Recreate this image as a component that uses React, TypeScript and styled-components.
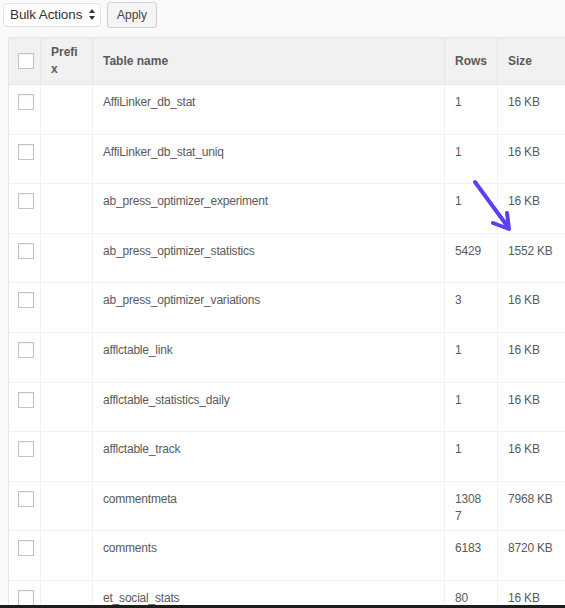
import React from "react";
import styled, { createGlobalStyle } from "styled-components";

const Global = createGlobalStyle`
  html, body { margin: 0; padding: 0; background: #fafafa; }
  body { font-family: "Liberation Sans", Arial, Helvetica, sans-serif; color: #555; }
  * { box-sizing: border-box; }
`;

const Page = styled.div`
  position: relative;
  height: 608px;
  width: 565px;
  overflow: hidden;
  display: grid;
  grid-template-rows: 1fr 3px;
`;

const Content = styled.div`
  overflow: hidden;
  min-height: 0;
`;

const Footer = styled.div`
  background: #1d1d1f;
`;

const Toolbar = styled.div`
  display: flex;
  align-items: center;
  gap: 6px;
  height: 37px;
  padding: 0 0 8px 3px;
`;

const Select = styled.div`
  display: flex;
  align-items: center;
  justify-content: space-between;
  width: 98px;
  height: 24px;
  padding: 0 5px 0 6px;
  background: #fff;
  border: 1px solid #e2e2e2;
  border-radius: 4px;
  font-size: 13.5px;
  letter-spacing: -0.1px;
  color: #333;
`;

const Button = styled.div`
  display: flex;
  align-items: center;
  justify-content: center;
  width: 50px;
  height: 26px;
  background: #f5f5f5;
  border: 1px solid #cfcfcf;
  border-radius: 3px;
  font-size: 12px;
  color: #444;
`;

const Table = styled.table`
  margin-left: 8px;
  width: 557px;
  border-collapse: collapse;
  table-layout: fixed;
  background: #fff;
  border: 1px solid #e5e5e5;
  font-size: 12px;
`;

const HeadCell = styled.th<{ $w: number }>`
  width: ${(p) => p.$w}px;
  height: 47px;
  padding: 0 10px;
  background: #f1f1f1;
  border-left: 1px solid #e6e6e6;
  border-bottom: 1px solid #e6e6e6;
  text-align: left;
  font-weight: bold;
  color: #5a5a5a;
  line-height: 17px;
  word-break: break-all;
  vertical-align: middle;
  &:first-child { border-left: none; }
`;

const Row = styled.tr`
  height: 49.6px;
`;

const Cell = styled.td`
  padding: 9px 10px 0;
  border-left: 1px solid #f1f1f1;
  border-bottom: 1px solid #f1f1f1;
  vertical-align: top;
  line-height: 17px;
  letter-spacing: -0.2px;
  color: #5a5a5a;
  word-break: break-all;
  &:first-child { border-left: none; }
`;

const CheckCell = styled(Cell)`
  padding: 9px 0 0 9px;
`;

const HeadCheck = styled(HeadCell)`
  padding: 0 0 0 9px;
`;

const Box = styled.span`
  display: block;
  width: 16px;
  height: 16px;
  border: 1px solid #c3c3c3;
  background: #fff;
  box-shadow: inset 0 1px 2px rgba(0, 0, 0, 0.06);
`;

const Arrow = styled.svg`
  position: absolute;
  left: 0;
  top: 0;
  pointer-events: none;
`;

const rows: [string, string, string][] = [
  ["AffiLinker_db_stat", "1", "16 KB"],
  ["AffiLinker_db_stat_uniq", "1", "16 KB"],
  ["ab_press_optimizer_experiment", "1", "16 KB"],
  ["ab_press_optimizer_statistics", "5429", "1552 KB"],
  ["ab_press_optimizer_variations", "3", "16 KB"],
  ["afflctable_link", "1", "16 KB"],
  ["afflctable_statistics_daily", "1", "16 KB"],
  ["afflctable_track", "1", "16 KB"],
  ["commentmeta", "13087", "7968 KB"],
  ["comments", "6183", "8720 KB"],
  ["et_social_stats", "80", "16 KB"],
];

export default function App() {
  return (
    <Page>
      <Global />
      <Content>
        <Toolbar>
          <Select>
            <span>Bulk Actions</span>
            <svg width="6" height="11" viewBox="0 0 6 11">
              <path d="M3 0 L6 4 L0 4 Z M0 7 L6 7 L3 11 Z" fill="#333" />
            </svg>
          </Select>
          <Button>Apply</Button>
        </Toolbar>
        <Table>
          <thead>
            <tr>
              <HeadCheck $w={32}>
                <Box />
              </HeadCheck>
              <HeadCell $w={52}>Prefix</HeadCell>
              <HeadCell $w={352}>Table name</HeadCell>
              <HeadCell $w={53}>Rows</HeadCell>
              <HeadCell $w={68}>Size</HeadCell>
            </tr>
          </thead>
          <tbody>
            {rows.map(([name, count, size]) => (
              <Row key={name}>
                <CheckCell>
                  <Box />
                </CheckCell>
                <Cell />
                <Cell>{name}</Cell>
                <Cell>{count}</Cell>
                <Cell>{size}</Cell>
              </Row>
            ))}
          </tbody>
        </Table>
      </Content>
      <Footer />
      <Arrow width="565" height="608" viewBox="0 0 565 608">
        <g stroke="#5b3ff0" strokeWidth="4" strokeLinecap="round" fill="none">
          <path d="M475 182 L508 227" />
          <path d="M493 223 L509 229 L507 213" strokeLinejoin="round" />
        </g>
      </Arrow>
    </Page>
  );
}
